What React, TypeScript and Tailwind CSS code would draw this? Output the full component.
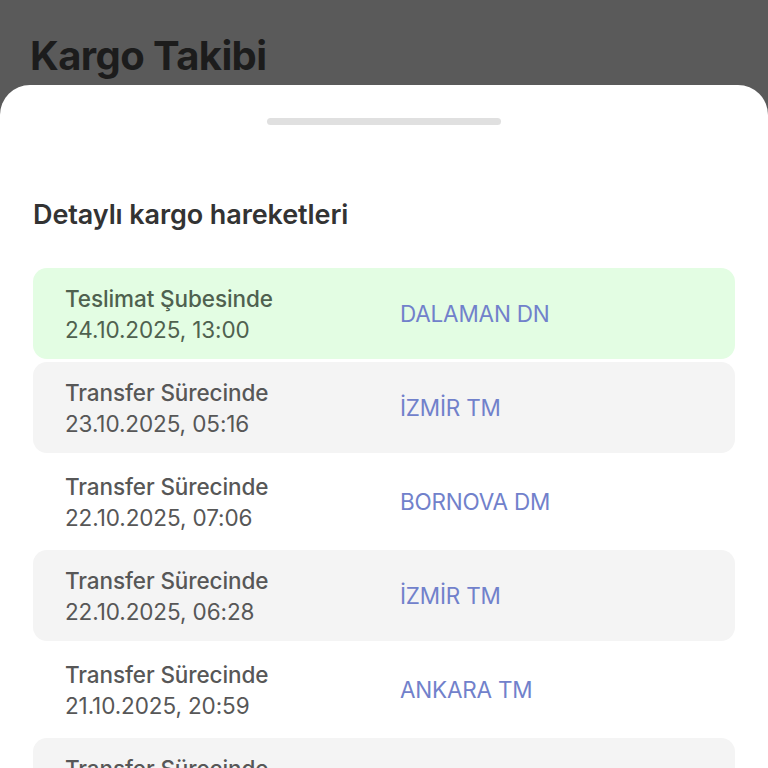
import React from 'react';

type Movement = {
  status: string;
  date: string;
  location: string;
  tone: 'green' | 'gray' | 'white';
};

const movements: Movement[] = [
  { status: 'Teslimat Şubesinde', date: '24.10.2025, 13:00', location: 'DALAMAN DN', tone: 'green' },
  { status: 'Transfer Sürecinde', date: '23.10.2025, 05:16', location: 'İZMİR TM', tone: 'gray' },
  { status: 'Transfer Sürecinde', date: '22.10.2025, 07:06', location: 'BORNOVA DM', tone: 'white' },
  { status: 'Transfer Sürecinde', date: '22.10.2025, 06:28', location: 'İZMİR TM', tone: 'gray' },
  { status: 'Transfer Sürecinde', date: '21.10.2025, 20:59', location: 'ANKARA TM', tone: 'white' },
  { status: 'Transfer Sürecinde', date: '21.10.2025, 18:12', location: 'ANKARA TM', tone: 'gray' },
];

const toneClass = {
  green: 'bg-[#e3fde3]',
  gray: 'bg-[#f4f4f4]',
  white: 'bg-white',
};

const Row = ({ item }: { item: Movement }) => (
  <div className={`flex h-[91px] shrink-0 items-center rounded-[14px] pl-[32px] ${toneClass[item.tone]}`}>
    <div className="w-[335px] shrink-0">
      <div className={`text-[22.5px] leading-[31px] font-medium tracking-[-0.1px] ${item.tone === 'green' ? 'text-[#4f614f]' : 'text-[#575757]'}`}>
        {item.status}
      </div>
      <div className={`text-[22.5px] leading-[31px] tracking-[-0.1px] ${item.tone === 'green' ? 'text-[#4f614f]' : 'text-[#575757]'}`}>
        {item.date}
      </div>
    </div>
    <div className="text-[22.5px] tracking-[-0.2px] text-[#7181cb]">{item.location}</div>
  </div>
);

export default function App() {
  return (
    <div className="flex h-[768px] w-[768px] flex-col overflow-hidden bg-[#5a5a5a]" style={{ fontFamily: 'Inter, "Noto Sans", sans-serif' }}>
      {/* dimmed page header behind the sheet */}
      <div className="h-[85px] shrink-0 px-[30px] pt-[31px]">
        <h1 className="text-[40px] leading-[50px] font-bold tracking-[-0.6px] text-[#1c1c1c]">Kargo Takibi</h1>
      </div>

      {/* bottom sheet */}
      <div className="flex flex-1 flex-col rounded-t-[30px] bg-white px-[33px]">
        <div className="flex justify-center pt-[33px]">
          <div className="h-[7px] w-[234px] rounded-full bg-[#e0e0e0]" />
        </div>
        <h2 className="mt-[74px] text-[27px] leading-[32px] font-semibold tracking-[-0.1px] text-[#333333]">Detaylı kargo hareketleri</h2>
        <div className="mt-[37px] flex flex-col gap-[3px]">
          {movements.map((m, i) => (
            <Row key={i} item={m} />
          ))}
        </div>
      </div>
    </div>
  );
}
